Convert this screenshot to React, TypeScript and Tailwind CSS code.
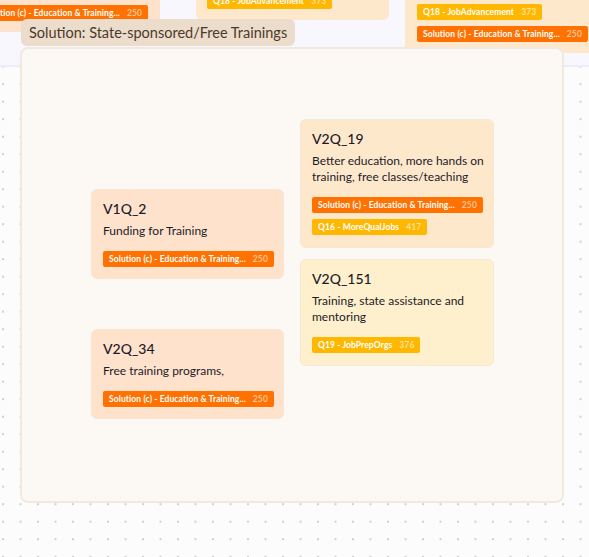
import type { ReactNode } from 'react';

type Badge = { label: string; count: number; tone: 'orange' | 'amber' };

const EDU: Badge = { label: 'Solution (c) - Education & Training...', count: 250, tone: 'orange' };

function Tag({ b }: { b: Badge }) {
  return (
    <div
      className={
        'flex h-[16px] items-center gap-[7px] rounded-[2px] px-[6px] text-[8.5px] font-bold leading-none tracking-[0.1px] text-white ' +
        (b.tone === 'orange' ? 'bg-[#ff7100]' : 'bg-[#ffb700]')
      }
    >
      <span className="whitespace-nowrap">{b.label}</span>
      <span className="text-white/60">{b.count}</span>
    </div>
  );
}

// a node on the canvas; its place is the content, hence the offsets
function Node({
  x,
  y,
  w,
  h,
  bg,
  title,
  lines,
  badges,
}: {
  x: number;
  y: number;
  w: number;
  h: number;
  bg: string;
  title: string;
  lines: ReactNode[];
  badges: Badge[];
}) {
  return (
    <div
      className={'absolute flex flex-col rounded-[6px] border border-[#f6e6d6] px-[11px] pt-[10px] ' + bg}
      style={{ left: x, top: y, width: w, height: h }}
    >
      <div className="text-[14px] font-medium leading-[18px] text-[#1d1a2a]">{title}</div>
      <div className="mt-[5px] flex flex-col text-[12px] leading-[16px] text-[#1d1a2a]">
        {lines.map((l, i) => (
          <span key={i} className="whitespace-nowrap">
            {l}
          </span>
        ))}
      </div>
      <div className="mt-[12px] flex flex-col items-start gap-[6px]">
        {badges.map((b, i) => (
          <Tag key={i} b={b} />
        ))}
      </div>
    </div>
  );
}

export default function App() {
  return (
    <div
      className="relative h-[557px] w-[589px] overflow-hidden bg-[#fcfcfc] bg-[radial-gradient(circle,#cfcfcf_0.9px,transparent_1.1px)] bg-[size:17.5px_17.5px] bg-[position:-5.75px_5.45px]"
      style={{ fontFamily: 'Lato, "Noto Sans", sans-serif' }}
    >
      {/* upper group, mostly off screen */}
      <div className="absolute left-0 top-0 h-[67px] w-[589px] border-b-2 border-[#eeeafb] bg-[#f8f7fe]" />

      {/* cropped nodes from the group above */}
      <div className="absolute left-[-60px] top-[-30px] h-[62px] w-[220px] rounded-[6px] bg-[#fee2cc]">
        <div className="absolute right-[12px] top-[35px]">
          <Tag b={EDU} />
        </div>
      </div>
      <div className="absolute left-[196px] top-[-40px] h-[60px] w-[193px] rounded-[6px] bg-[#fee8cc]">
        <div className="absolute left-[11px] top-[33px]">
          <Tag b={{ label: 'Q18 - JobAdvancement', count: 373, tone: 'amber' }} />
        </div>
      </div>
      <div className="absolute left-[405px] top-[-20px] flex h-[73px] w-[200px] flex-col items-start gap-[6px] rounded-[6px] bg-[#fee8cc] pl-[12px] pt-[24px]">
        <Tag b={{ label: 'Q18 - JobAdvancement', count: 373, tone: 'amber' }} />
        <Tag b={EDU} />
      </div>

      {/* group */}
      <div className="absolute left-[20px] top-[47px] h-[456px] w-[544px] rounded-[8px] border-2 border-[#f3e8dc] bg-[#fcf8f4]" />
      <div className="absolute left-[21px] top-[19px] flex h-[27px] items-center rounded-[6px] bg-[#ecdccb] px-[8px] text-[14.5px] text-[#4b3a2a]">
        Solution: State-sponsored/Free Trainings
      </div>

      <Node
        x={300}
        y={119}
        w={194}
        h={129}
        bg="bg-[#fee8cc]"
        title="V2Q_19"
        lines={['Better education, more hands on', 'training, free classes/teaching']}
        badges={[EDU, { label: 'Q16 - MoreQualJobs', count: 417, tone: 'amber' }]}
      />
      <Node x={91} y={189} w={193} h={90} bg="bg-[#fee2cc]" title="V1Q_2" lines={['Funding for Training']} badges={[EDU]} />
      <Node
        x={300}
        y={259}
        w={194}
        h={107}
        bg="bg-[#fef0cc]"
        title="V2Q_151"
        lines={['Training, state assistance and', 'mentoring']}
        badges={[{ label: 'Q19 - JobPrepOrgs', count: 376, tone: 'amber' }]}
      />
      <Node x={91} y={329} w={193} h={90} bg="bg-[#fee2cc]" title="V2Q_34" lines={['Free training programs,']} badges={[EDU]} />
    </div>
  );
}
